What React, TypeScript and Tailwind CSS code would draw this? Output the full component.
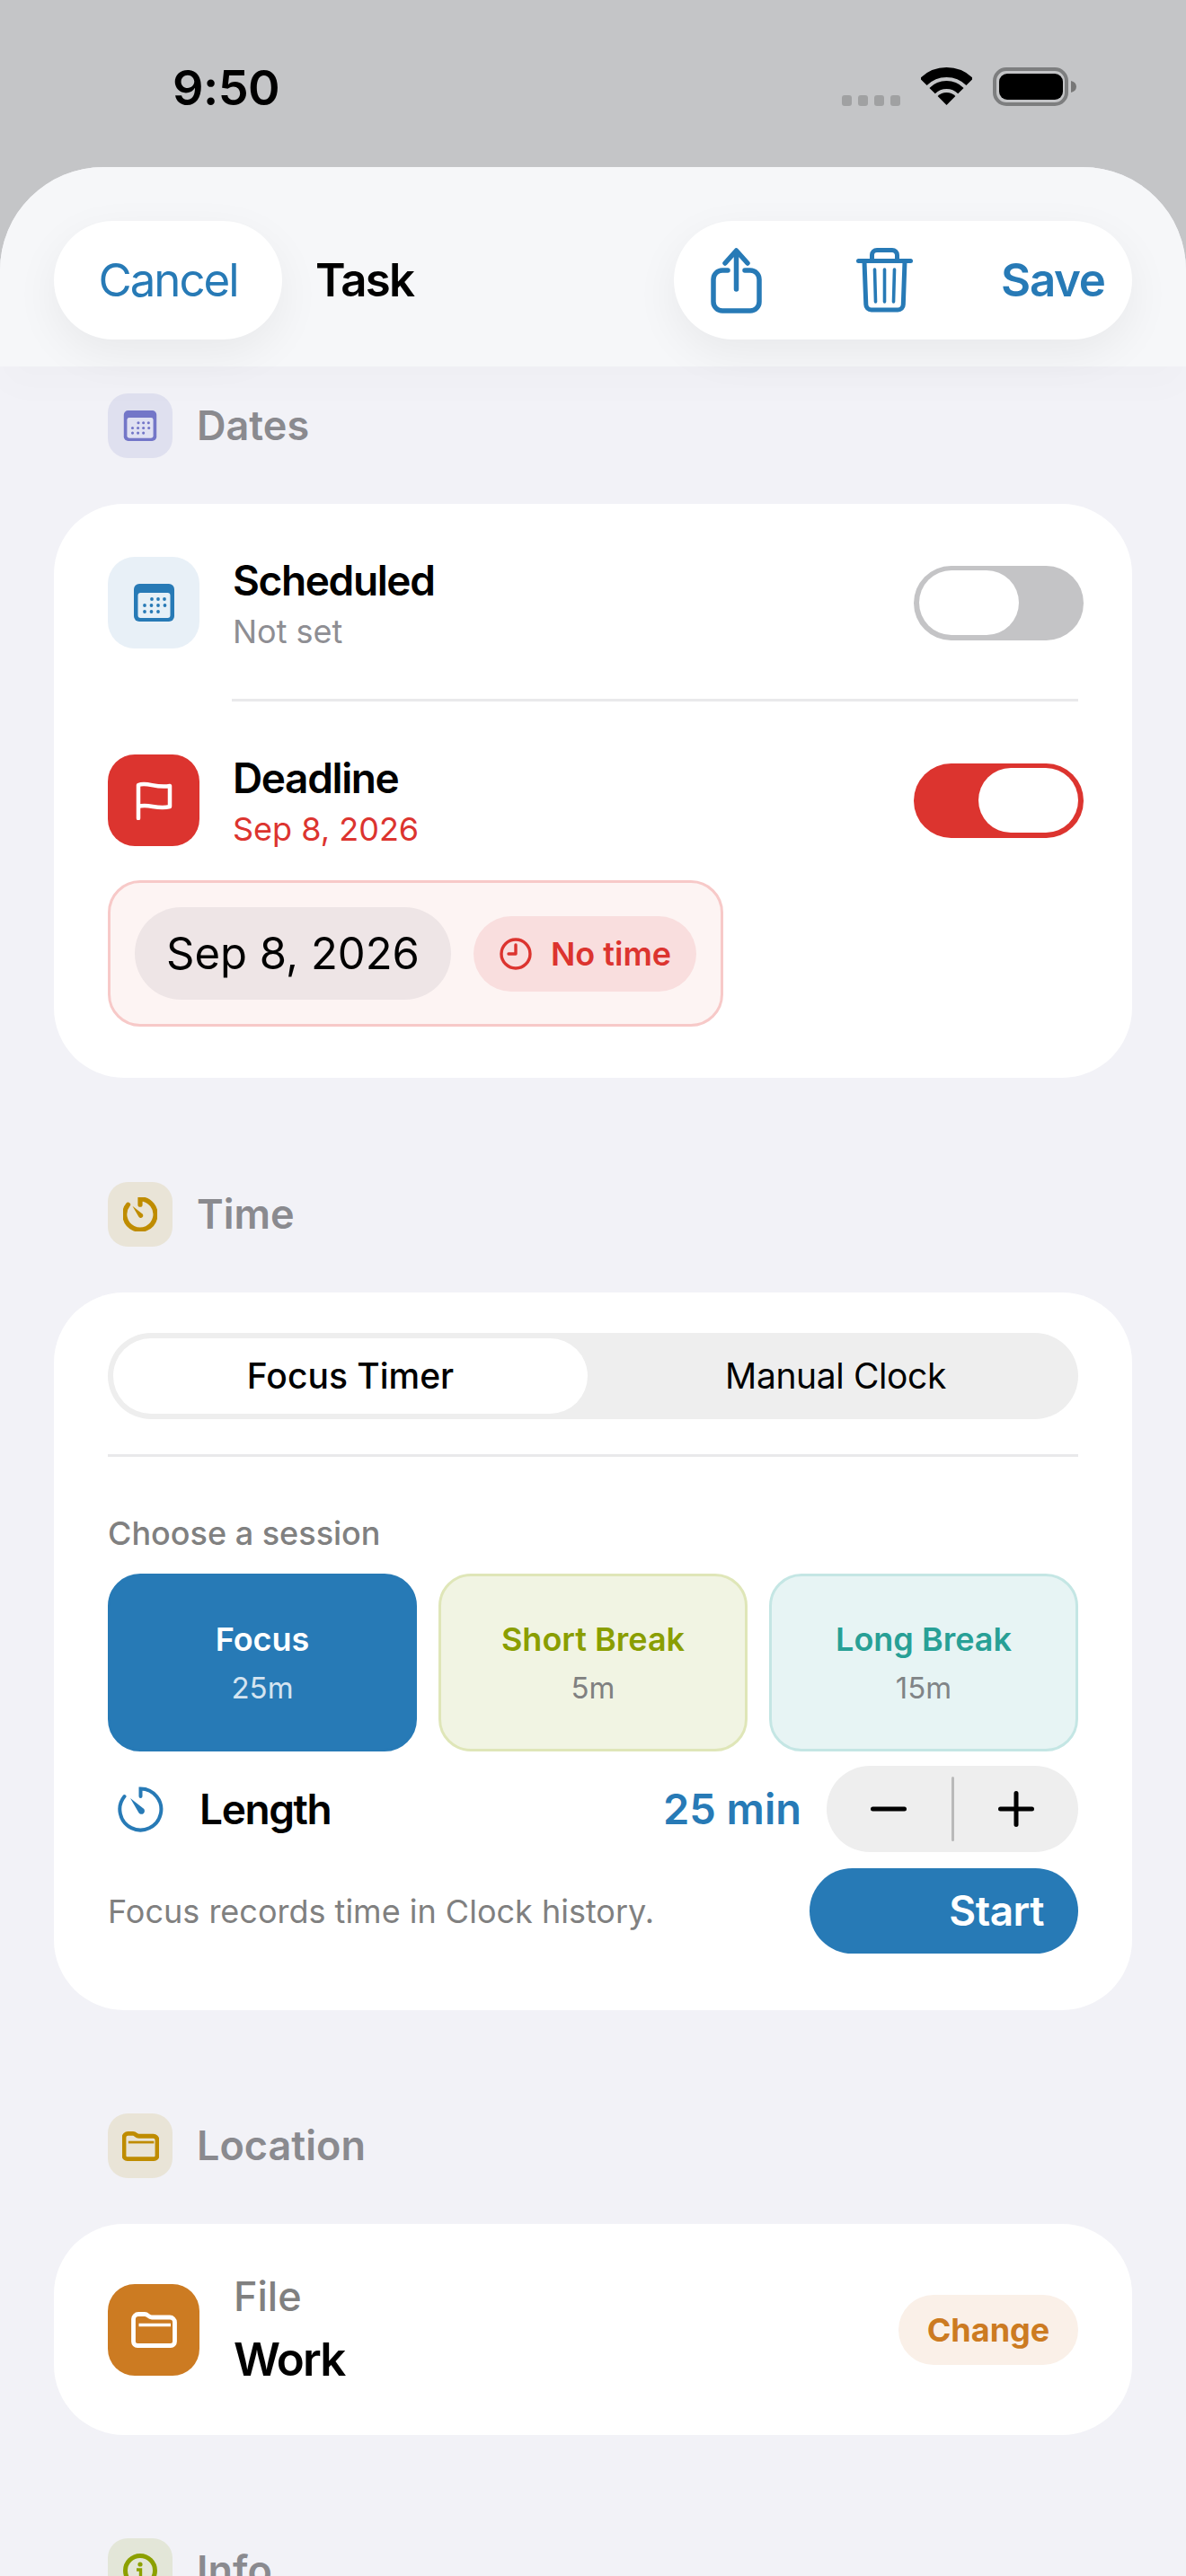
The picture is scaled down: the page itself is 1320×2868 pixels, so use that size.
import React from "react";

const BLUE = "#277ab6";

/* ── Icons ── */

function CalendarIcon({ color, panel, className }: { color: string; panel: string; className: string }) {
  const dots = [
    [20, 17], [27, 17], [34, 17],
    [12, 24], [19.5, 24], [27, 24], [34.5, 24],
    [12, 31], [19.5, 31], [27, 31],
  ];
  return (
    <svg viewBox="0 0 45 42" className={className}>
      <rect width="45" height="42" rx="6" fill={color} />
      <rect x="4.5" y="10" width="36" height="28" rx="3" fill={panel} />
      {dots.map(([x, y]) => (
        <circle key={`${x}-${y}`} cx={x} cy={y} r="1.9" fill={color} />
      ))}
    </svg>
  );
}

function TimerIcon({ color, width, className }: { color: string; width: number; className: string }) {
  return (
    <svg viewBox="0 0 51 51" fill="none" className={className}>
      <path d="M25.5 11V2.5A23 23 0 1 1 7.5 11" stroke={color} strokeWidth={width} strokeLinecap="round" />
      <path d="M14 13L28 24a3.6 3.6 0 1 1-5 4.5Z" fill={color} />
    </svg>
  );
}

function FolderIcon({ color, width, className }: { color: string; width: number; className: string }) {
  return (
    <svg viewBox="0 0 51 40" fill="none" className={className}>
      <path
        d="M2.5 8A5.5 5.5 0 0 1 8 2.5H15C19 2.5 19 6 23 6H43A5.5 5.5 0 0 1 48.5 11.5V33A4.5 4.5 0 0 1 44 37.5H7A4.5 4.5 0 0 1 2.5 33Z"
        stroke={color}
        strokeWidth={width}
      />
      <path d="M8.5 14.5H44" stroke={color} strokeWidth="3.4" />
    </svg>
  );
}

function StatusIcons() {
  return (
    <div className="flex items-start">
      <div className="mt-[31px] flex gap-[7px]">
        {[0, 1, 2, 3].map((i) => (
          <span key={i} className="h-[12px] w-[11px] rounded-[3px] bg-[#a0a1a2]" />
        ))}
      </div>
      <svg viewBox="0 0 57 42" className="ml-[23px] h-[42px] w-[57px]" fill="none">
        <path d="M2.7 16.2A36.5 36.5 0 0 1 54.3 16.2" stroke="#000" strokeWidth="11" />
        <path d="M12.6 26.1A22.5 22.5 0 0 1 44.4 26.1" stroke="#000" strokeWidth="9" />
        <path d="M28.5 42L18.6 32.1A14 14 0 0 1 38.4 32.1Z" fill="#000" />
      </svg>
      <svg viewBox="0 0 93 43" className="ml-[23px] h-[43px] w-[93px]" fill="none">
        <rect x="2" y="2" width="80" height="39" rx="13" stroke="#7d7e7f" strokeWidth="4" />
        <rect x="7" y="7" width="71" height="29" rx="9" fill="#000" />
        <path d="M87 15a8 7 0 0 1 6 6.5a8 7 0 0 1-6 6.5Z" fill="#777" />
      </svg>
    </div>
  );
}

/* ── Small parts ── */

function SectionLabel({ title, bg, children }: { title: string; bg: string; children: React.ReactNode }) {
  return (
    <div className="flex items-center gap-[27px] pl-[120px]">
      <div className={`flex h-[72px] w-[72px] items-center justify-center rounded-[22px] ${bg}`}>{children}</div>
      <span className="text-[45px] leading-[54px] font-semibold text-[#8a8a8f]">{title}</span>
    </div>
  );
}

function Toggle({ on, track }: { on: boolean; track: string }) {
  return (
    <div className={`-mr-[6px] flex h-[83px] w-[189px] items-center rounded-full px-[6px] ${track} ${on ? "justify-end" : "justify-start"}`}>
      <div className="h-[72px] w-[111px] rounded-full bg-white" />
    </div>
  );
}

const SESSIONS = [
  { name: "Focus", mins: "25m", card: "bg-[#277ab6] border-[#277ab6]", title: "text-white", sub: "text-[#d4e4f0]" },
  { name: "Short Break", mins: "5m", card: "bg-[#f1f4e3] border-[#dfe6b8]", title: "text-[#8a9e00]", sub: "text-[#808080]" },
  { name: "Long Break", mins: "15m", card: "bg-[#e7f4f4] border-[#c4e6e4]", title: "text-[#28a096]", sub: "text-[#808487]" },
];

/* ── Page ── */

export default function App() {
  return (
    <div className="h-[2868px] w-[1320px] overflow-hidden bg-[#c4c5c7] font-['Inter',sans-serif] text-black">
      {/* Status bar */}
      <div className="flex h-[186px] items-start justify-between pt-[75px] pr-[122px] pl-[192px]">
        <span className="-mt-[4px] text-[54px] leading-[54px] font-semibold tracking-[-0.01em]">9:50</span>
        <StatusIcons />
      </div>

      {/* Sheet */}
      <div className="h-[2682px] overflow-hidden rounded-t-[115px] bg-[#f2f2f7]">
        <div className="relative flex h-[222px] items-start bg-[#f6f7f9] px-[60px] pt-[60px] shadow-[0_24px_40px_rgba(0,0,0,0.015)]">
          <button className="flex h-[132px] w-[254px] items-center justify-center rounded-full bg-white text-[51px] tracking-[-0.04em] text-[#277ab6] shadow-[0_16px_50px_rgba(0,0,0,0.06)]">
            Cancel
          </button>
          <span className="ml-[37px] text-[51px] leading-[132px] font-semibold tracking-[-0.035em]">Task</span>
          <div className="ml-auto flex h-[132px] w-[510px] items-center rounded-full bg-white pl-[41px] shadow-[0_16px_50px_rgba(0,0,0,0.06)]">
            <svg viewBox="0 0 57 73" fill="none" className="h-[73px] w-[57px]" stroke={BLUE} strokeWidth="5.5" strokeLinecap="round" strokeLinejoin="round">
              <path d="M19 25H13A10 10 0 0 0 3 35V60A10 10 0 0 0 13 70H44A10 10 0 0 0 54 60V35A10 10 0 0 0 44 25H38" />
              <path d="M28.5 46V4M16 17L28.5 3L41 17" />
            </svg>
            <svg viewBox="0 0 63 72" fill="none" className="ml-[105px] h-[72px] w-[63px]" stroke={BLUE} strokeLinecap="round">
              <path d="M2.5 14.5H60.5" strokeWidth="5" />
              <path d="M17.5 14V8A5.5 5.5 0 0 1 23 2.5H40A5.5 5.5 0 0 1 45.5 8V14" strokeWidth="5" />
              <path d="M9 15L10.8 63A6 6 0 0 0 16.8 69H46.3A6 6 0 0 0 52.3 63L54 15" strokeWidth="5" />
              <path d="M20.5 24L21.5 60M31.5 24V60M42.5 24L41.5 60" strokeWidth="3.6" />
            </svg>
            <span className="ml-[98px] text-[51px] font-semibold tracking-[-0.025em] text-[#277ab6]">Save</span>
          </div>
        </div>

        <div className="pt-[30px]">
          {/* Dates */}
          <SectionLabel title="Dates" bg="bg-[#dfe0ef]">
            <CalendarIcon color="#7376c8" panel="#e0e1f2" className="h-[34px] w-[38px]" />
          </SectionLabel>
          <section className="mx-[60px] mt-[51px] h-[639px] rounded-[78px] bg-white px-[60px] pt-[59px]">
            <div className="flex h-[102px] items-center">
              <div className="flex h-[102px] w-[102px] items-center justify-center rounded-[30px] bg-[#e8f0f7]">
                <CalendarIcon color={BLUE} panel="#e6f0f7" className="h-[42px] w-[45px]" />
              </div>
              <div className="ml-[37px] flex flex-col gap-[6px]">
                <span className="text-[46px] leading-[58px] font-semibold tracking-[-0.03em]">Scheduled</span>
                <span className="text-[36px] leading-[44px] text-[#8e8e93]">Not set</span>
              </div>
              <div className="ml-auto">
                <Toggle on={false} track="bg-[#c4c4c6]" />
              </div>
            </div>
            <div className="mt-[56px] ml-[138px] h-[3px] bg-[#e9e9eb]" />
            <div className="mt-[59px] flex h-[102px] items-center">
              <div className="flex h-[102px] w-[102px] items-center justify-center rounded-[30px] bg-[#dc342f]">
                <svg viewBox="0 0 41 44" fill="none" className="h-[44px] w-[41px]" stroke="#fff" strokeWidth="4.5" strokeLinecap="round" strokeLinejoin="round">
                  <path d="M3 42V5C13 1 22 9 38 6V29C24 33 14 25 3 29" />
                </svg>
              </div>
              <div className="ml-[37px] flex flex-col gap-[6px]">
                <span className="text-[46px] leading-[58px] font-semibold tracking-[-0.03em]">Deadline</span>
                <span className="text-[36px] leading-[44px] text-[#dc342f]">Sep 8, 2026</span>
              </div>
              <div className="ml-auto">
                <Toggle on track="bg-[#dc342f]" />
              </div>
            </div>
            <div className="mt-[38px] flex h-[163px] w-[685px] items-center gap-[25px] rounded-[36px] border-[3px] border-[#f7c9c8] bg-[#fdf4f3] pl-[27px]">
              <div className="flex h-[103px] w-[352px] items-center justify-center rounded-full bg-[#eee5e6] text-[49px]">Sep 8, 2026</div>
              <div className="flex h-[84px] w-[248px] items-center gap-[21px] rounded-full bg-[#f9dede] pl-[29px]">
                <svg viewBox="0 0 36 36" fill="none" className="h-[36px] w-[36px]" stroke="#dc342f" strokeWidth="3.4" strokeLinecap="round" strokeLinejoin="round">
                  <circle cx="18" cy="18" r="16" />
                  <path d="M18 8V18H10" />
                </svg>
                <span className="text-[36px] font-semibold text-[#dc342f]">No time</span>
              </div>
            </div>
          </section>

          {/* Time */}
          <div className="mt-[116px]">
            <SectionLabel title="Time" bg="bg-[#e9e4d7]">
              <TimerIcon color="#bf8c00" width={7} className="h-[38px] w-[38px]" />
            </SectionLabel>
          </div>
          <section className="mx-[60px] mt-[51px] h-[799px] rounded-[78px] bg-white px-[60px] pt-[45px]">
            <div className="flex h-[96px] rounded-full bg-[#eeeeee] p-[6px]">
              <div className="flex w-[528px] items-center justify-center rounded-full bg-white text-[39px] font-medium">Focus Timer</div>
              <div className="flex flex-1 items-center justify-center pl-[12px] text-[39px] tracking-[-0.01em]">Manual Clock</div>
            </div>
            <div className="mt-[39px] h-[3px] bg-[#e9e9eb]" />
            <div className="mt-[63px] text-[36px] leading-[44px] font-medium text-[#808080]">Choose a session</div>
            <div className="mt-[23px] grid grid-cols-3 gap-[24px]">
              {SESSIONS.map((s) => (
                <div key={s.name} className={`flex h-[198px] flex-col items-center justify-center gap-[12px] rounded-[36px] border-[3px] ${s.card}`}>
                  <span className={`text-[36px] leading-[44px] font-semibold ${s.title}`}>{s.name}</span>
                  <span className={`text-[33px] leading-[40px] ${s.sub}`}>{s.mins}</span>
                </div>
              ))}
            </div>
            <div className="mt-[16px] flex h-[96px] items-center">
              <TimerIcon color={BLUE} width={4} className="ml-[11px] h-[51px] w-[51px]" />
              <span className="ml-[40px] text-[46px] font-semibold tracking-[-0.03em]">Length</span>
              <span className="ml-auto text-[47px] font-semibold text-[#277ab6]">25 min</span>
              <div className="ml-[28px] flex h-[96px] w-[280px] items-center rounded-full bg-[#eeeeee]">
                <div className="flex flex-1 items-center justify-center">
                  <svg viewBox="0 0 40 40" className="h-[40px] w-[40px]" stroke="#000" strokeWidth="5" strokeLinecap="round">
                    <path d="M2.5 20H37.5" />
                  </svg>
                </div>
                <div className="h-[72px] w-[3px] rounded-full bg-[#b9b9b9]" />
                <div className="flex flex-1 items-center justify-center">
                  <svg viewBox="0 0 40 40" className="h-[40px] w-[40px]" stroke="#000" strokeWidth="5" strokeLinecap="round">
                    <path d="M2.5 20H37.5M20 2.5V37.5" />
                  </svg>
                </div>
              </div>
            </div>
            <div className="mt-[18px] flex h-[95px] items-center justify-between">
              <span className="text-[36px] text-[#808080]">Focus records time in Clock history.</span>
              <button className="flex h-[95px] w-[299px] items-center justify-end rounded-full bg-[#277ab6] pr-[38px] text-[46px] font-semibold tracking-[-0.01em] text-white">Start</button>
            </div>
          </section>

          {/* Location */}
          <div className="mt-[115px]">
            <SectionLabel title="Location" bg="bg-[#e9e4d7]">
              <FolderIcon color="#bf8c00" width={6} className="h-[35px] w-[41px]" />
            </SectionLabel>
          </div>
          <section className="mx-[60px] mt-[51px] flex h-[235px] items-center rounded-[78px] bg-white px-[60px]">
            <div className="flex h-[102px] w-[102px] items-center justify-center rounded-[30px] bg-[#cc7b22]">
              <FolderIcon color="#fff" width={4.8} className="h-[40px] w-[51px]" />
            </div>
            <div className="ml-[38px] flex flex-col gap-[13px]">
              <span className="text-[45px] leading-[54px] font-medium text-[#808080]">File</span>
              <span className="text-[51px] leading-[60px] font-semibold tracking-[-0.035em]">Work</span>
            </div>
            <button className="ml-auto flex h-[78px] w-[200px] items-center justify-center rounded-full bg-[#faf0e8] text-[36px] font-bold text-[#cc7b22]">Change</button>
          </section>

          {/* Info */}
          <div className="mt-[115px]">
            <SectionLabel title="Info" bg="bg-[#e3e6d8]">
              <svg viewBox="0 0 38 38" fill="none" className="h-[38px] w-[38px]">
                <circle cx="19" cy="19" r="16.5" stroke="#8ca000" strokeWidth="5" />
                <circle cx="19" cy="12" r="2.6" fill="#8ca000" />
                <path d="M15 18H19.5V27M15 27.5H24" stroke="#8ca000" strokeWidth="3.4" />
              </svg>
            </SectionLabel>
          </div>
        </div>
      </div>
    </div>
  );
}
